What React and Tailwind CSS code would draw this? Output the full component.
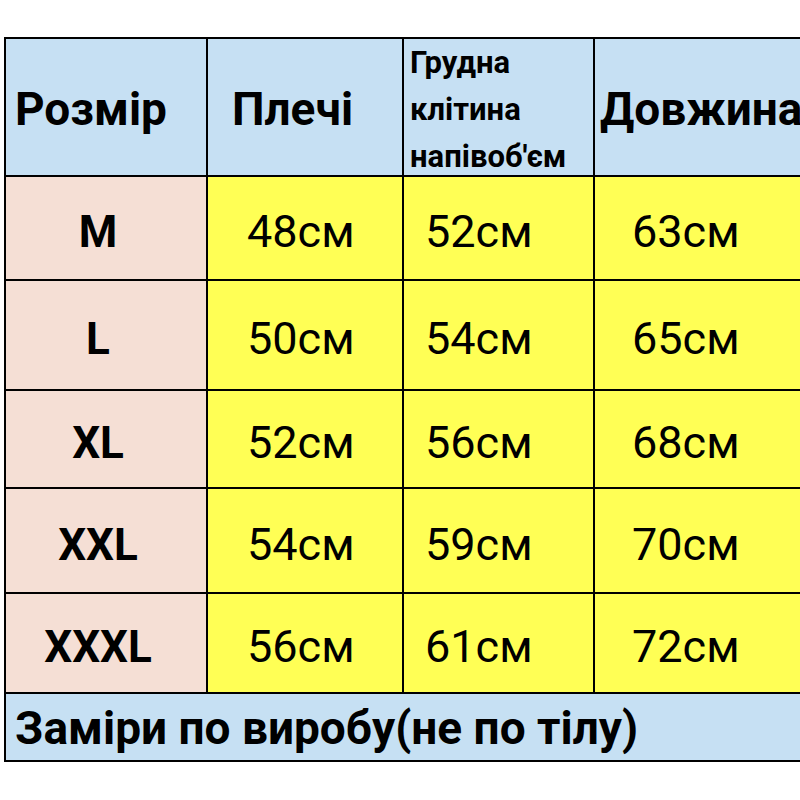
import React from 'react';

const rows = [
  { size: 'M', vals: ['48см', '52см', '63см'] },
  { size: 'L', vals: ['50см', '54см', '65см'] },
  { size: 'XL', vals: ['52см', '56см', '68см'] },
  { size: 'XXL', vals: ['54см', '59см', '70см'] },
  { size: 'XXXL', vals: ['56см', '61см', '72см'] },
];

const rowH = ['h-[102px]', 'h-[108px]', 'h-[96px]', 'h-[103px]', 'h-[98px]'];

const App = () => {
  return (
    <div className="w-[800px] h-[800px] overflow-hidden bg-white pt-[37px] pl-[4px] text-black" style={{ fontFamily: 'Roboto, "Noto Sans", sans-serif' }}>
      <div className="w-[900px] bg-black p-[2px] grid grid-cols-[200px_194px_189px_300px] gap-[2px]">
        {/* шапка */}
        <div className="h-[136px] bg-[#c6e0f3] flex items-center pl-[9px] pt-[4px] text-[46px] font-bold">Розмір</div>
        <div className="h-[136px] bg-[#c6e0f3] flex items-center pl-[24px] pt-[4px] text-[46px] font-bold">Плечі</div>
        <div className="h-[136px] bg-[#c6e0f3] flex flex-col justify-start pl-[6px] text-[31px] font-bold leading-[47px] whitespace-nowrap overflow-hidden">
          <span>Грудна</span>
          <span>клітина</span>
          <span>напівоб'єм</span>
        </div>
        <div className="h-[136px] bg-[#c6e0f3] flex items-center pl-[5px] pt-[4px] text-[46px] font-bold whitespace-nowrap">Довжина</div>

        {rows.map((r, i) => (
          <React.Fragment key={r.size}>
            <div className={`${rowH[i]} bg-[#f5dfd5] flex items-center justify-center pr-[16px] pt-[8px] text-[44px] font-bold`}>{r.size}</div>
            <div className={`${rowH[i]} bg-[#ffff55] flex items-center pl-[39px] pt-[8px] text-[45px]`}>{r.vals[0]}</div>
            <div className={`${rowH[i]} bg-[#ffff55] flex items-center pl-[21px] pt-[8px] text-[45px]`}>{r.vals[1]}</div>
            <div className={`${rowH[i]} bg-[#ffff55] flex items-center pl-[37px] pt-[8px] text-[45px]`}>{r.vals[2]}</div>
          </React.Fragment>
        ))}

        <div className="col-span-4 h-[66px] bg-[#c6e0f3] flex items-center pl-[9px] pt-[2px] text-[46px] font-bold whitespace-nowrap">
          Заміри по виробу(не по тілу)
        </div>
      </div>
    </div>
  );
};

export default App;
